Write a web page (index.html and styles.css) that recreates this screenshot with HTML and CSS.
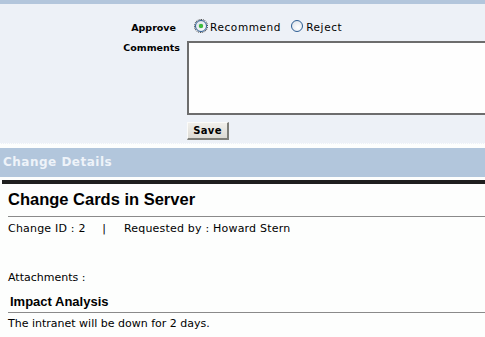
FILE: index.html
```html
<!DOCTYPE html>
<html>
<head>
<meta charset="utf-8">
<link rel="stylesheet" href="styles.css">
</head>
<body>
<div class="topbar"></div>
<form class="review">
  <div class="row approve-row">
    <div class="label approve-label">Approve</div>
    <div class="field radios">
      <label class="radio-opt"><span class="radio checked focused"><span class="dot"></span></span>Recommend</label>
      <label class="radio-opt"><span class="radio"></span>Reject</label>
    </div>
  </div>
  <div class="row comments-row">
    <div class="label">Comments</div>
    <div class="field"><div class="textarea"></div></div>
  </div>
  <div class="row save-row">
    <div class="label"></div>
    <div class="field"><button type="button" class="save">Save</button></div>
  </div>
</form>
<div class="section-head">Change Details</div>
<div class="details">
  <div class="rule-black"></div>
  <h1 class="title">Change Cards in Server</h1>
  <div class="meta">Change ID : 2 <span class="sep">|</span> Requested by : Howard Stern</div>
  <div class="attach">Attachments :</div>
  <h2 class="sub">Impact Analysis</h2>
  <div class="text">The intranet will be down for 2 days.</div>
</div>
</body>
</html>
```
FILE: styles.css
```css
html, body {
  margin: 0;
  padding: 0;
  background: #fdfefd;
  overflow: hidden;
}
body {
  width: 485px;
  height: 337px;
  font-family: "DejaVu Sans", Verdana, sans-serif;
  color: #000;
}
.topbar {
  height: 4px;
  background: #b3c6dc;
}
.review {
  background: #edf1f7;
  padding-top: 14px;
  padding-bottom: 3px;
  border-bottom: 1px dotted #fbfcfe;
  margin: 0;
}
.row {
  display: grid;
  grid-template-columns: 187px 1fr;
}
.label {
  font-weight: bold;
  font-size: 9.5px;
  text-align: right;
  padding-right: 7px;
}
.approve-label {
  padding-right: 11px;
  padding-top: 4px;
}
.radios {
  display: flex;
  align-items: flex-end;
  font-size: 10.5px;
  letter-spacing: 0.6px;
  margin-left: 8px;
  padding-top: 1px;
}
.radio-opt {
  display: flex;
  align-items: flex-end;
  margin-right: 10px;
  line-height: 12px;
}
.radio {
  box-sizing: border-box;
  width: 12px;
  height: 12px;
  border: 1px solid #2c5d93;
  border-radius: 50%;
  background: radial-gradient(circle at 60% 65%, #ffffff 0%, #e3e8ee 70%, #c9d2de 100%);
  display: flex;
  align-items: center;
  justify-content: center;
  margin-right: 3px;
  margin-bottom: 1px;
}
.radio.focused {
  outline: 1px dotted #333;
  outline-offset: 0px;
}
.dot {
  width: 4px;
  height: 4px;
  border-radius: 50%;
  background: #3bbf3b;
  box-shadow: 0 0 1px #1a8f1a;
}
.comments-row {
  margin-top: 8px;
}
.comments-row .label {
  padding-top: 1px;
}
.textarea {
  box-sizing: border-box;
  height: 74px;
  width: 310px;
  background: #fefefe;
  border-top: 2px solid #6d6d6d;
  border-left: 2px solid #6d6d6d;
  border-bottom: 2px solid #6d6d6d;
}
.save-row {
  margin-top: 4px;
}
.save {
  box-sizing: border-box;
  width: 42px;
  height: 18px;
  padding: 0;
  font-family: "DejaVu Sans", Verdana, sans-serif;
  font-weight: bold;
  font-size: 10px;
  letter-spacing: 0.3px;
  background: linear-gradient(#f0efeb, #dcdad4);
  border-top: 1px solid #fbfbf9;
  border-left: 1px solid #fbfbf9;
  border-right: 2px solid #7d7d78;
  border-bottom: 2px solid #7d7d78;
  color: #000;
}
.section-head {
  margin-top: 4px;
  background: #b2c6dc;
  color: #eef3f9;
  font-weight: bold;
  font-size: 12px;
  height: 29px;
  line-height: 29px;
  padding-left: 3px;
  letter-spacing: 0.5px;
}
.details {
  padding: 3px 0 0 2px;
}
.rule-black {
  height: 4px;
  background: #1f1f1f;
}
.title {
  margin: 0 0 0 6px;
  font-family: "Liberation Sans", Arial, sans-serif;
  font-size: 16.5px;
  font-weight: bold;
  padding-top: 6px;
  height: 26px;
  border-bottom: 1px solid #8a8a8a;
}
.meta {
  font-size: 11px;
  padding: 5px 0 0 6px;
  height: 41px;
  letter-spacing: 0.2px;
}
.sep {
  display: inline-block;
  margin: 0 14px 0 13px;
  color: #000;
}
.attach {
  font-size: 11px;
  padding-left: 6px;
  padding-top: 8px;
}
.sub {
  margin: 10px 0 0 6px;
  font-family: "Liberation Sans", Arial, sans-serif;
  font-size: 13px;
  font-weight: bold;
  padding-left: 2px;
  height: 18px;
  border-bottom: 1px solid #8a8a8a;
}
.text {
  font-size: 11px;
  padding: 4px 0 0 6px;
}
```
